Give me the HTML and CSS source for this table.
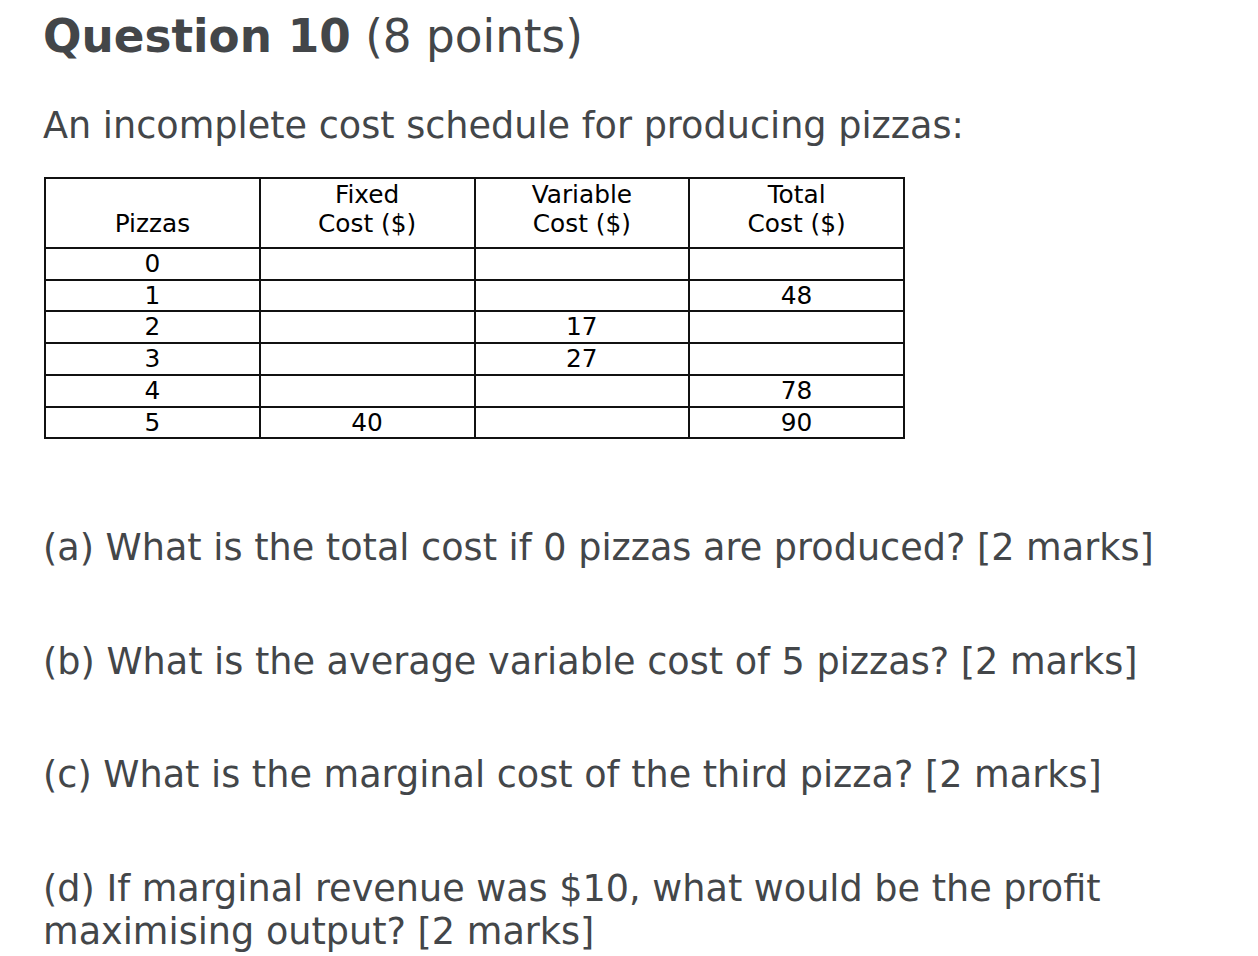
FILE: index.html
```html
<!DOCTYPE html>
<html lang="en">
<head>
<meta charset="utf-8">
<title>Question 10</title>
<link rel="stylesheet" href="styles.css">
</head>
<body>
<div class="page">
  <h1 class="title"><strong>Question 10</strong> (8 points)</h1>
  <p class="intro">An incomplete cost schedule for producing pizzas:</p>
  <table class="schedule">
    <thead>
      <tr>
        <th>Pizzas</th>
        <th>Fixed<br>Cost ($)</th>
        <th>Variable<br>Cost ($)</th>
        <th>Total<br>Cost ($)</th>
      </tr>
    </thead>
    <tbody>
      <tr><td>0</td><td></td><td></td><td></td></tr>
      <tr><td>1</td><td></td><td></td><td>48</td></tr>
      <tr><td>2</td><td></td><td>17</td><td></td></tr>
      <tr><td>3</td><td></td><td>27</td><td></td></tr>
      <tr><td>4</td><td></td><td></td><td>78</td></tr>
      <tr><td>5</td><td>40</td><td></td><td>90</td></tr>
    </tbody>
  </table>
  <div class="questions">
    <p class="q">(a) What is the total cost if 0 pizzas are produced? [2 marks]</p>
    <p class="q">(b) What is the average variable cost of 5 pizzas? [2 marks]</p>
    <p class="q">(c) What is the marginal cost of the third pizza? [2 marks]</p>
    <p class="q">(d) If marginal revenue was $10, what would be the profit maximising output? [2 marks]</p>
  </div>
</div>
</body>
</html>
```

FILE: styles.css
```css
html, body {
  margin: 0;
  padding: 0;
  background: #ffffff;
}

.page {
  font-family: "DejaVu Sans", Verdana, sans-serif;
  color: #434649;
  padding: 10px 0 0 43px;
  width: 1160px;
}

.title {
  margin: 0;
  font-size: 45.3px;
  line-height: 54px;
  font-weight: normal;
}

.title strong {
  font-weight: bold;
}

.intro {
  margin: 40px 0 0 0;
  font-size: 36.6px;
  line-height: 43px;
}

.schedule {
  margin-top: 30px;
  margin-left: 1px;
  border-collapse: collapse;
  table-layout: fixed;
  width: 861px;
  color: #000000;
  font-size: 24.8px;
}

.schedule th,
.schedule td {
  border: 2px solid #111111;
  text-align: center;
  padding: 0;
}

.schedule th {
  font-weight: normal;
  vertical-align: bottom;
  line-height: 29px;
  padding: 1px 0 9px 0;
}

.schedule td {
  line-height: 29.7px;
  vertical-align: middle;
}

.questions {
  margin-top: 87px;
  display: flex;
  flex-direction: column;
  gap: 70.5px;
}

.q {
  margin: 0;
  font-size: 36.6px;
  line-height: 43px;
  max-width: 1120px;
}
```
